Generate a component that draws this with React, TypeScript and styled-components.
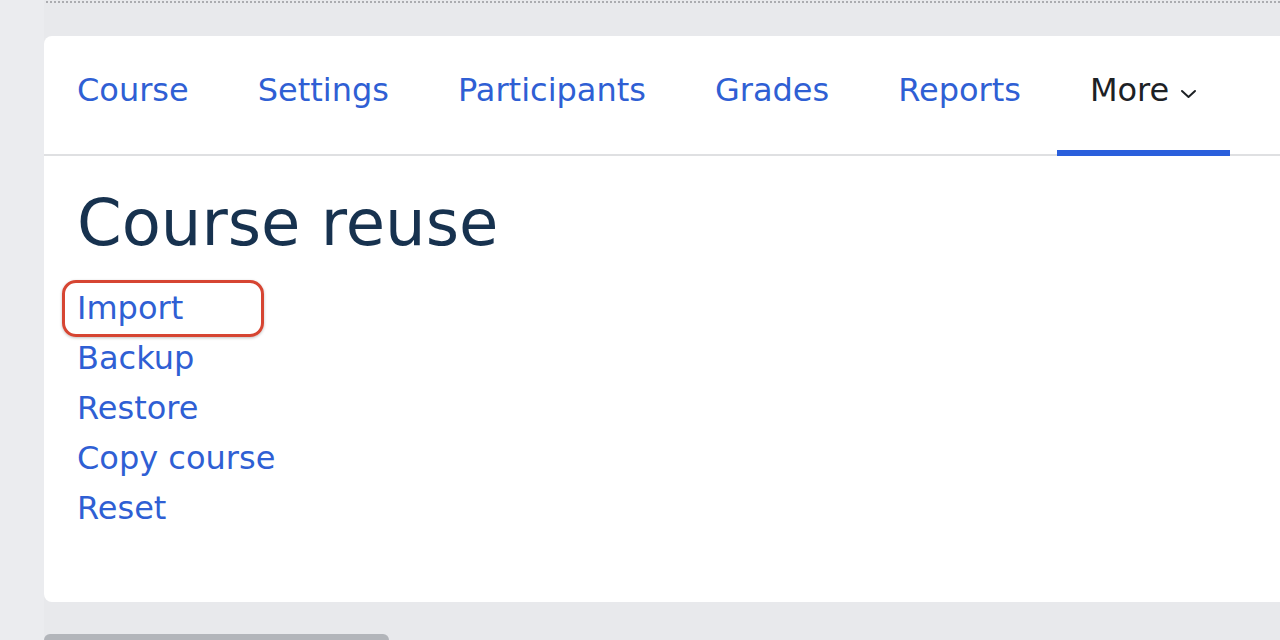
import React from 'react';
import styled, { createGlobalStyle } from 'styled-components';

const GlobalStyle = createGlobalStyle`
  html, body {
    margin: 0;
    padding: 0;
    background: #e8e9ec;
    font-family: "DejaVu Sans", "Noto Sans", sans-serif;
  }
`;

const Page = styled.div`
  display: flex;
  height: 640px;
  overflow: hidden;
`;

const Gutter = styled.div`
  width: 44px;
  flex-shrink: 0;
  background: #ebecef;
`;

const Main = styled.div`
  flex: 1;
  display: flex;
  flex-direction: column;
  background: #e8e9ec;
  min-width: 0;
`;

const TopRule = styled.div`
  flex-shrink: 0;
  margin: 1px 0 0 2px;
  border-top: 2px dotted #abacb0;
`;

const Card = styled.div`
  flex-shrink: 0;
  margin-top: 33px;
  margin-right: -20px;
  height: 566px;
  background: #ffffff;
  border-radius: 8px 0 0 8px;
  display: flex;
  flex-direction: column;
`;

const Nav = styled.nav`
  display: flex;
  gap: 3px;
  height: 120px;
  border-bottom: 2px solid #dfe0e2;
  box-sizing: border-box;
`;

const Tab = styled.a<{ $active?: boolean }>`
  display: flex;
  align-items: flex-start;
  gap: 11px;
  padding: 34px 33px 0;
  margin-bottom: -2px;
  font-size: 32px;
  line-height: 40px;
  color: ${p => (p.$active ? '#1d2125' : '#2f5fd4')};
  text-decoration: none;
  border-bottom: 6px solid ${p => (p.$active ? '#2a5fdc' : 'transparent')};
  cursor: pointer;
  white-space: nowrap;
`;

const Chevron = styled.svg`
  width: 17px;
  height: 10px;
  margin-top: 19px;
`;

const Body = styled.div`
  padding: 30px 33px 0;
`;

const Heading = styled.h2`
  margin: 0 0 22px;
  font-size: 64px;
  font-weight: 400;
  line-height: 75px;
  color: #17324f;
`;

const LinkList = styled.ul`
  list-style: none;
  margin: 0;
  padding: 0;
`;

const LinkItem = styled.li<{ $marked?: boolean }>`
  position: relative;
  font-size: 32px;
  line-height: 50px;

  &::after {
    content: '';
    display: ${p => (p.$marked ? 'block' : 'none')};
    position: absolute;
    left: -15px;
    top: -3px;
    width: 202px;
    height: 57px;
    box-sizing: border-box;
    border: 3px solid #d64532;
    border-radius: 14px;
    box-shadow: 0 1px 3px rgba(0, 0, 0, 0.25);
  }
`;

const Link = styled.a`
  color: #2f5fd4;
  text-decoration: none;
`;

const BottomBar = styled.div`
  flex-shrink: 0;
  margin-top: 32px;
  width: 345px;
  height: 20px;
  background: #b2b5ba;
  border-radius: 6px 6px 0 0;
`;

const tabs = ['Course', 'Settings', 'Participants', 'Grades', 'Reports'];
const links = ['Import', 'Backup', 'Restore', 'Copy course', 'Reset'];

export default () => {
    return (
        <>
            <GlobalStyle/>
            <Page>
                <Gutter/>
                <Main>
                    <TopRule/>
                    <Card>
                        <Nav>
                            {tabs.map(t => (
                                <Tab key={t}>{t}</Tab>
                            ))}
                            <Tab $active>
                                More
                                <Chevron viewBox="0 0 17 10" fill="none">
                                    <path d="M2 2l6.5 6 6.5-6" stroke="#1d2125" strokeWidth="2" strokeLinecap="round" strokeLinejoin="round"/>
                                </Chevron>
                            </Tab>
                        </Nav>
                        <Body>
                            <Heading>Course reuse</Heading>
                            <LinkList>
                                {links.map((l, i) => (
                                    <LinkItem key={l} $marked={i === 0}>
                                        <Link>{l}</Link>
                                    </LinkItem>
                                ))}
                            </LinkList>
                        </Body>
                    </Card>
                    <BottomBar/>
                </Main>
            </Page>
        </>
    );
};
